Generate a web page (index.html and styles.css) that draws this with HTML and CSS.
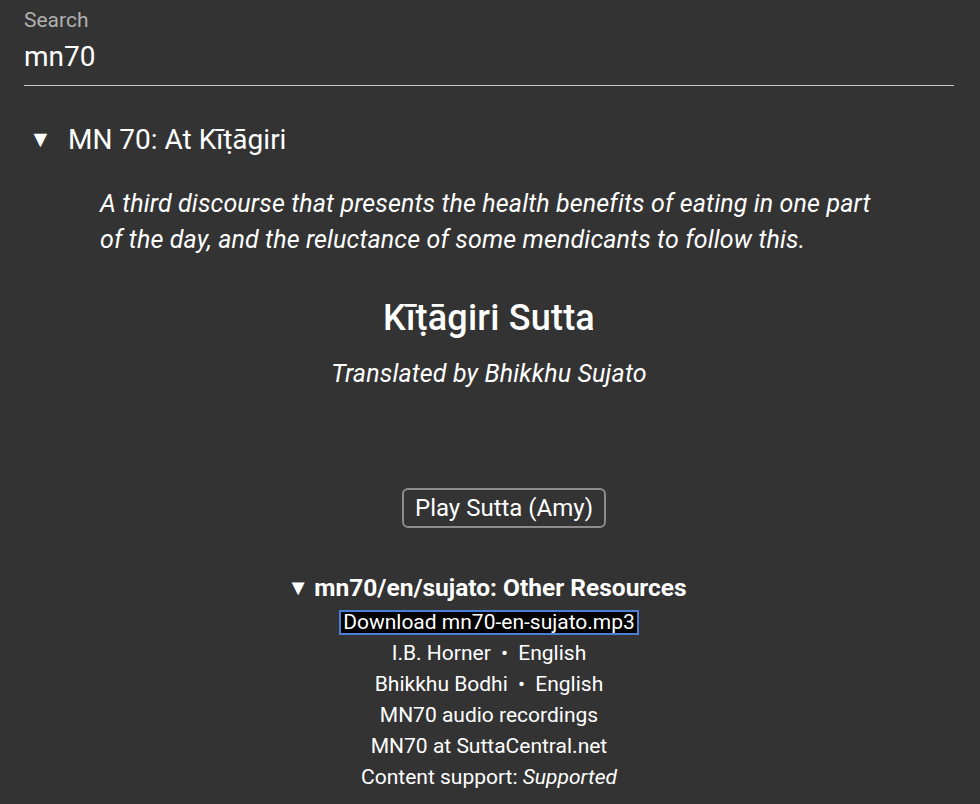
FILE: index.html
```html
<!DOCTYPE html>
<html>
<head>
<meta charset="utf-8">
<link rel="stylesheet" href="styles.css">
</head>
<body>
<div class="page">
  <div class="search">
    <label class="search-label">Search</label>
    <div class="search-input">mn70</div>
  </div>
  <div class="sutta">
    <div class="sutta-summary"><span class="tri">▼</span><span>MN 70: At Kīṭāgiri</span></div>
    <p class="blurb">A third discourse that presents the health benefits of eating in one part of the day, and the reluctance of some mendicants to follow this.</p>
    <h1 class="title">Kīṭāgiri Sutta</h1>
    <p class="byline">Translated by Bhikkhu Sujato</p>
    <div class="play-row"><button class="play">Play Sutta (Amy)</button></div>
    <div class="res-summary"><span class="tri small">▼</span><span>mn70/en/sujato: Other Resources</span></div>
    <ul class="resources">
      <li><a class="download">Download mn70-en-sujato.mp3</a></li>
      <li>I.B. Horner <span class="dot">•</span> English</li>
      <li>Bhikkhu Bodhi <span class="dot">•</span> English</li>
      <li>MN70 audio recordings</li>
      <li>MN70 at SuttaCentral.net</li>
      <li>Content support: <em>Supported</em></li>
    </ul>
  </div>
</div>
</body>
</html>
```
FILE: styles.css
```css
html, body {
  margin: 0;
  background: #333333;
}
body {
  font-family: Roboto, "Noto Sans", sans-serif;
  color: #ffffff;
}
.page {
  padding: 0 26px 0 24px;
}
.search {
  padding-top: 8px;
  border-bottom: 1px solid #c8c8c8;
}
.search-label {
  display: block;
  font-size: 21px;
  line-height: 24px;
  color: #b0b0b0;
}
.search-input {
  font-size: 28px;
  line-height: 32px;
  padding: 9px 0 12px;
  color: #ffffff;
}
.sutta-summary {
  display: flex;
  align-items: center;
  font-size: 28px;
  line-height: 34px;
  margin-top: 37px;
}
.tri {
  font-size: 23px;
  width: 44px;
  padding-left: 5px;
  box-sizing: border-box;
}
.tri.small {
  font-size: 22px;
  width: 27px;
  padding-left: 0;
  margin-left: -4px;
}
.blurb {
  font-style: italic;
  font-size: 25px;
  letter-spacing: 0.14px;
  line-height: 36px;
  margin: 29px 0 0;
  padding: 0 80px 0 76px;
}
.title {
  text-align: center;
  font-size: 36px;
  font-weight: 500;
  letter-spacing: 0.2px;
  line-height: 40px;
  margin: 40px 0 0;
}
.byline {
  text-align: center;
  font-style: italic;
  font-size: 25px;
  letter-spacing: 0.15px;
  line-height: 30px;
  margin: 21px 0 0;
}
.play-row {
  display: flex;
  justify-content: center;
  padding-left: 30px;
  margin-top: 99px;
}
.play {
  font-family: inherit;
  font-size: 24px;
  color: #ffffff;
  background: transparent;
  border: 2px solid #8c8c8c;
  border-radius: 6px;
  padding: 0 11px;
  height: 40px;
}
.res-summary {
  display: flex;
  justify-content: center;
  align-items: center;
  font-size: 24.5px;
  font-weight: 700;
  line-height: 30px;
  margin-top: 45px;
}
.resources {
  list-style: none;
  margin: 7px 0 0;
  padding: 0;
  text-align: center;
  font-size: 21px;
  line-height: 31px;
}
.resources li:first-child {
  line-height: 25px;
  margin-bottom: 3px;
}
.download {
  display: inline-block;
  background: #000000;
  outline: 2px solid #4a7fd8;
  outline-offset: -2px;
  padding: 0 4px;
  line-height: 25px;
  color: #ffffff;
}
.dot {
  font-size: 21px;
  padding: 0 5px;
}
```
